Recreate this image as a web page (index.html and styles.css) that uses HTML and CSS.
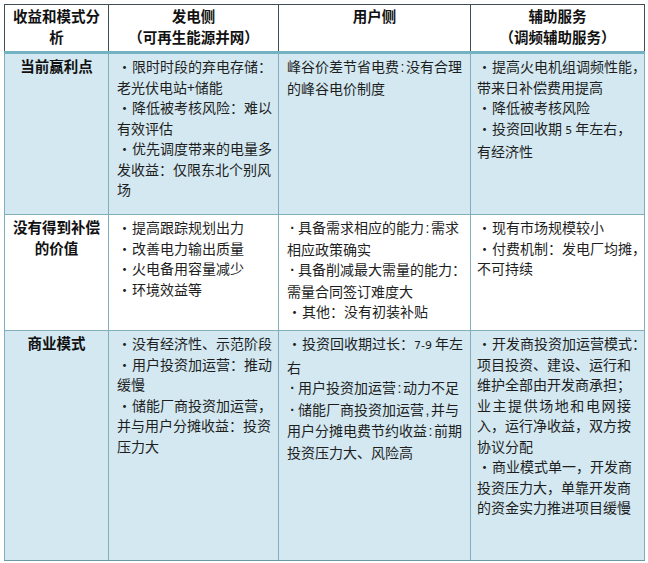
FILE: index.html
```html
<!DOCTYPE html>
<html lang="zh-CN">
<head>
<meta charset="utf-8">
<title>收益和模式分析</title>
<link rel="stylesheet" href="styles.css">
</head>
<body>
<table class="grid">
  <colgroup>
    <col class="c1"><col class="c2"><col class="c3"><col class="c4">
  </colgroup>
  <thead>
    <tr class="head">
      <th>收益和模式分<br>析</th>
      <th>发电侧<br>（可再生能源并网）</th>
      <th>用户侧</th>
      <th>辅助服务<br>（调频辅助服务）</th>
    </tr>
  </thead>
  <tbody>
    <tr class="row r1 blue">
      <th>当前赢利点</th>
      <td>
        <span class="ln"><span class="b">·</span>限时时段的弃电存储：</span>
        <span class="ln">老光伏电站+储能</span>
        <span class="ln"><span class="b">·</span>降低被考核风险：难以</span>
        <span class="ln">有效评估</span>
        <span class="ln"><span class="b">·</span>优先调度带来的电量多</span>
        <span class="ln">发收益：仅限东北个别风</span>
        <span class="ln">场</span>
      </td>
      <td class="u">
        <span class="ln">峰谷价差节省电费<span class="hc">:</span>没有合理</span>
        <span class="ln">的峰谷电价制度</span>
      </td>
      <td class="a">
        <span class="ln"><span class="b">·</span>提高火电机组调频性能，</span>
        <span class="ln">带来日补偿费用提高</span>
        <span class="ln"><span class="b">·</span>降低被考核风险</span>
        <span class="ln"><span class="b">·</span>投资回收期 <span class="num">5</span> 年左右，</span>
        <span class="ln">有经济性</span>
      </td>
    </tr>
    <tr class="row r2">
      <th>没有得到补偿<br>的价值</th>
      <td>
        <span class="ln"><span class="b">·</span>提高跟踪规划出力</span>
        <span class="ln"><span class="b">·</span>改善电力输出质量</span>
        <span class="ln"><span class="b">·</span>火电备用容量减少</span>
        <span class="ln"><span class="b">·</span>环境效益等</span>
      </td>
      <td class="u">
        <span class="ln"><span class="bn">·</span>具备需求相应的能力<span class="hc">:</span>需求</span>
        <span class="ln">相应政策确实</span>
        <span class="ln"><span class="bn">·</span>具备削减最大需量的能力：</span>
        <span class="ln">需量合同签订难度大</span>
        <span class="ln"><span class="b">·</span>其他：没有初装补贴</span>
      </td>
      <td class="a">
        <span class="ln"><span class="b">·</span>现有市场规模较小</span>
        <span class="ln"><span class="b">·</span>付费机制：发电厂均摊，</span>
        <span class="ln">不可持续</span>
      </td>
    </tr>
    <tr class="row r3 blue">
      <th>商业模式</th>
      <td>
        <span class="ln"><span class="b">·</span>没有经济性、示范阶段</span>
        <span class="ln"><span class="b">·</span>用户投资加运营：推动</span>
        <span class="ln">缓慢</span>
        <span class="ln"><span class="b">·</span>储能厂商投资加运营，</span>
        <span class="ln">并与用户分摊收益：投资</span>
        <span class="ln">压力大</span>
      </td>
      <td class="u">
        <span class="ln"><span class="b">·</span>投资回收期过长：<span class="num">7-9</span> 年左</span>
        <span class="ln">右</span>
        <span class="ln"><span class="bn">·</span>用户投资加运营<span class="hc">:</span>动力不足</span>
        <span class="ln"><span class="bn">·</span>储能厂商投资加运营<span class="hc">,</span>并与</span>
        <span class="ln">用户分摊电费节约收益<span class="hc">:</span>前期</span>
        <span class="ln">投资压力大、风险高</span>
      </td>
      <td class="a">
        <span class="ln"><span class="b">·</span>开发商投资加运营模式：</span>
        <span class="ln">项目投资、建设、运行和</span>
        <span class="ln">维护全部由开发商承担；</span>
        <span class="ln just">业主提供场地和电网接</span>
        <span class="ln">入，运行净收益，双方按</span>
        <span class="ln">协议分配</span>
        <span class="ln"><span class="b">·</span>商业模式单一，开发商</span>
        <span class="ln">投资压力大，单靠开发商</span>
        <span class="ln">的资金实力推进项目缓慢</span>
      </td>
    </tr>
  </tbody>
</table>
</body>
</html>
```

FILE: styles.css
```css
html, body {
  margin: 0;
  padding: 0;
  background: #ffffff;
}

body {
  font-family: "Noto Sans CJK SC", "Noto Sans", sans-serif;
  color: #1e1e1e;
  font-size: 14px;
  line-height: 20.5px;
}

.grid {
  margin: 4px 0 0 4px;
  width: 640px;
  border-collapse: collapse;
  table-layout: fixed;
}

.c1 { width: 104px; }
.c2 { width: 170px; }
.c3 { width: 192px; }
.c4 { width: 174px; }

.head th {
  height: 45px;
  padding: 1px 2px 0;
  vertical-align: top;
  text-align: center;
  font-weight: 700;
  font-size: 14.5px;
  color: #111;
  border: 1px solid #3f4d55;
  border-bottom: 3px solid #73b2c1;
  background: #ffffff;
}

.row th,
.row td {
  vertical-align: top;
  border: 1px solid #80aeb9;
}

.row th {
  text-align: center;
  font-weight: 700;
  font-size: 14.5px;
  color: #111;
  padding: 2px 2px 0;
}

.row td {
  text-align: left;
  padding: 2px 4px 0 8px;
  white-space: nowrap;
  overflow: visible;
}

.row td.u {
  padding-left: 8px;
}

.row td.a {
  padding-left: 6px;
}

.blue th,
.blue td {
  background: #d3e8f1;
}

.r1 { height: 162px; }
.r2 { height: 116px; }
.r3 { height: 230px; }

.row:last-child th,
.row:last-child td {
  border-bottom: 1px solid #6d98a4;
}

.ln {
  display: block;
}

.ln.just {
  text-align: justify;
  text-align-last: justify;
  width: 154px;
}

.b {
  display: inline-block;
  width: 15px;
  text-align: center;
}

.bn {
  display: inline-block;
  width: 11px;
  text-align: center;
  font-family: "Liberation Sans", sans-serif;
  font-weight: 700;
}

.hc {
  display: inline-block;
  width: 7px;
  text-align: center;
  font-family: "Liberation Sans", sans-serif;
}

.num {
  font-family: "DejaVu Sans", sans-serif;
  font-size: 11px;
}
```
